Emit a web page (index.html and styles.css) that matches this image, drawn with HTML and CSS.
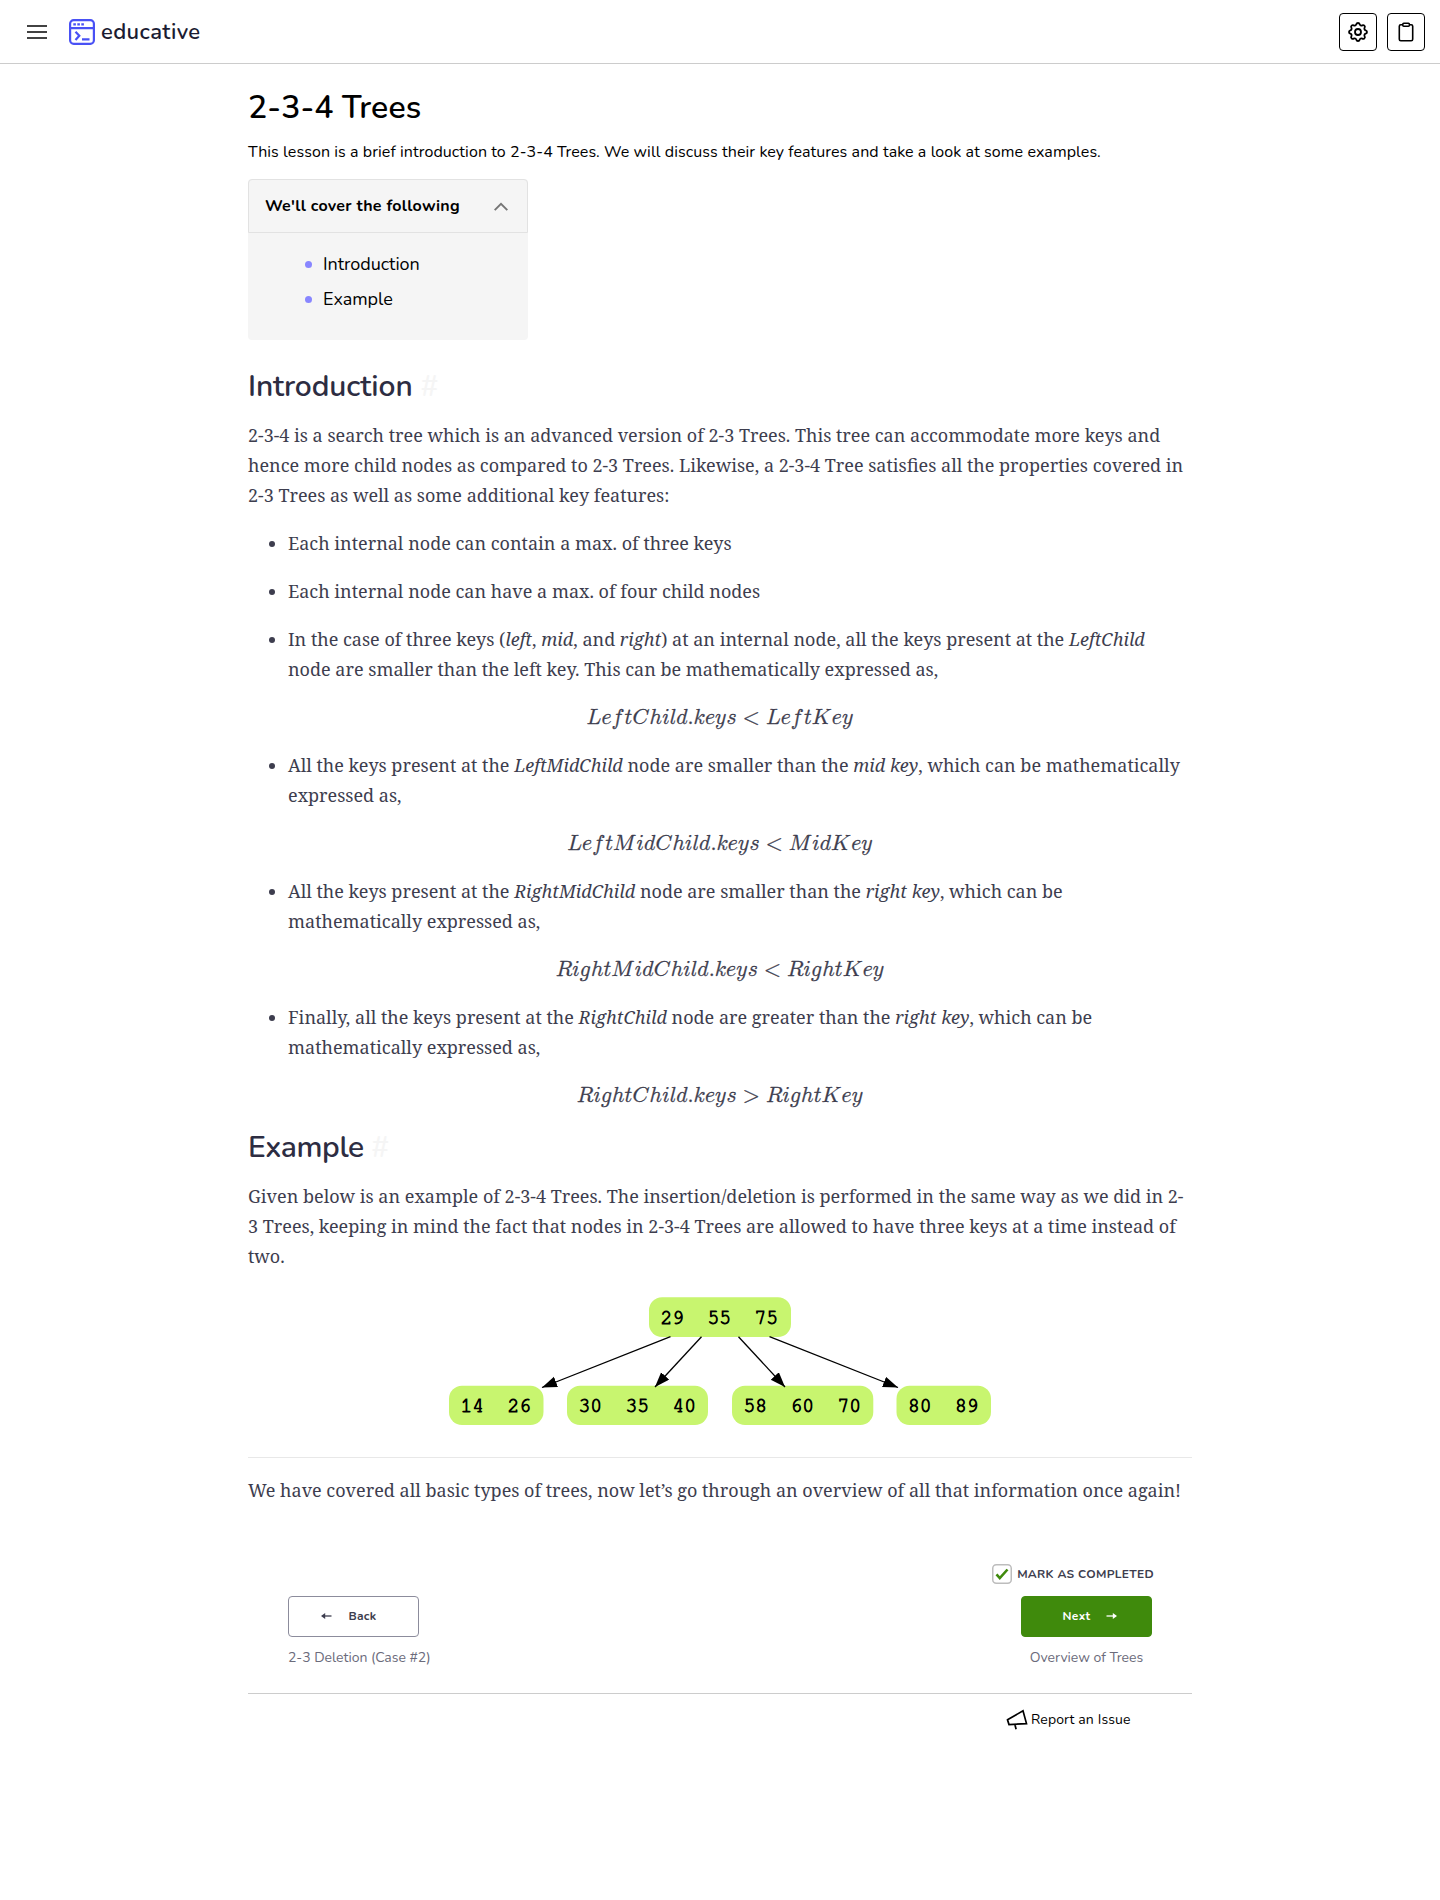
FILE: index.html
```
<!DOCTYPE html>
<html lang="en">
<head>
<meta charset="utf-8">
<title>2-3-4 Trees</title>
<link rel="stylesheet" href="styles.css">
</head>
<body>
<header class="topbar">
  <svg class="menu" width="20" height="15" viewBox="0 0 20 15"><path d="M0 2h20M0 8h20M0 14h20" stroke="#424242" stroke-width="2"/></svg>
  <a class="brand">
    <svg width="26" height="26" viewBox="0 0 26 26" fill="none" stroke="#4951f5" stroke-width="2.2"><rect x="1.1" y="1.1" width="23.8" height="23.8" rx="3.6"/><path d="M1 9.2h24M6.500 12.700l3.800 4.100-3.800 4.100M13 20.300h7.500"/><path d="M4.300 5.400h2.600M8.300 5.400h2.600M12.300 5.400h2.600" stroke-width="2.400"/></svg>
    <span>educative</span>
  </a>
  <div class="tools">
    <button class="tool"><svg width="24" height="24" viewBox="0 0 24 24" fill="none" stroke="#000" stroke-width="1.800" stroke-linejoin="round"><circle cx="12" cy="12" r="3"/><path d="M10.325 4.317c.426-1.756 2.924-1.756 3.350 0a1.724 1.724 0 0 0 2.573 1.066c1.543-.94 3.310.826 2.370 2.370a1.724 1.724 0 0 0 1.065 2.572c1.756.426 1.756 2.924 0 3.350a1.724 1.724 0 0 0-1.066 2.573c.94 1.543-.826 3.310-2.370 2.370a1.724 1.724 0 0 0-2.572 1.065c-.426 1.756-2.924 1.756-3.350 0a1.724 1.724 0 0 0-2.573-1.066c-1.543.94-3.310-.826-2.370-2.370a1.724 1.724 0 0 0-1.065-2.572c-1.756-.426-1.756-2.924 0-3.350a1.724 1.724 0 0 0 1.066-2.573c-.94-1.543.826-3.310 2.370-2.370 1 .608 2.296.070 2.572-1.065z"/></svg></button>
    <button class="tool"><svg width="16" height="20" viewBox="0 0 16 20" fill="none" stroke="#000" stroke-width="1.600"><rect x="1.300" y="2.800" width="13.400" height="15.900" rx="1.500"/><rect x="4.800" y="1.300" width="6.600" height="3" rx="1" fill="#fff"/></svg></button>
  </div>
</header>
<main class="lesson">
  <h1>2-3-4 Trees</h1>
  <p class="summary">This lesson is a brief introduction to 2-3-4 Trees. We will discuss their key features and take a look at some examples.</p>
  <nav class="toc">
    <div class="toc-head">We'll cover the following
      <svg width="14" height="9" viewBox="0 0 14 9" fill="none" stroke="#757575" stroke-width="1.900"><path d="M.7 8.200L7 1.800l6.300 6.400"/></svg>
    </div>
    <ul><li>Introduction</li><li>Example</li></ul>
  </nav>
  <h2>Introduction <span class="hash">#</span></h2>
  <div class="prose">
    <p>2-3-4 is a search tree which is an advanced version of 2-3 Trees. This tree can accommodate more keys and hence more child nodes as compared to 2-3 Trees. Likewise, a 2-3-4 Tree satisfies all the properties covered in 2-3 Trees as well as some additional key features:</p>
    <ul>
      <li>Each internal node can contain a max. of three keys</li>
      <li>Each internal node can have a max. of four child nodes</li>
      <li>In the case of three keys (<em>left</em>, <em>mid</em>, and <em>right</em>) at an internal node, all the keys present at the <em>LeftChild</em> node are smaller than the left key. This can be mathematically expressed as,</li>
    </ul>
    <div class="formula"><math><mi>L</mi><mi>e</mi><mi class="f">f</mi><mi>t</mi><mi class="c">C</mi><mi>h</mi><mi>i</mi><mi>l</mi><mi>d</mi><mi mathvariant="normal">.</mi><mi>k</mi><mi>e</mi><mi class="y">y</mi><mi>s</mi><mo>&lt;</mo><mi>L</mi><mi>e</mi><mi class="f">f</mi><mi>t</mi><mi class="c">K</mi><mi>e</mi><mi class="y">y</mi></math></div>
    <ul><li>All the keys present at the <em>LeftMidChild</em> node are smaller than the <em>mid key</em>, which can be mathematically expressed as,</li></ul>
    <div class="formula"><math><mi>L</mi><mi>e</mi><mi class="f">f</mi><mi>t</mi><mi class="m">M</mi><mi>i</mi><mi>d</mi><mi class="c">C</mi><mi>h</mi><mi>i</mi><mi>l</mi><mi>d</mi><mi mathvariant="normal">.</mi><mi>k</mi><mi>e</mi><mi class="y">y</mi><mi>s</mi><mo>&lt;</mo><mi class="m">M</mi><mi>i</mi><mi>d</mi><mi class="c">K</mi><mi>e</mi><mi class="y">y</mi></math></div>
    <ul><li>All the keys present at the <em>RightMidChild</em> node are smaller than the <em>right key</em>, which can be mathematically expressed as,</li></ul>
    <div class="formula"><math><mi>R</mi><mi>i</mi><mi class="y">g</mi><mi>h</mi><mi>t</mi><mi class="m">M</mi><mi>i</mi><mi>d</mi><mi class="c">C</mi><mi>h</mi><mi>i</mi><mi>l</mi><mi>d</mi><mi mathvariant="normal">.</mi><mi>k</mi><mi>e</mi><mi class="y">y</mi><mi>s</mi><mo>&lt;</mo><mi>R</mi><mi>i</mi><mi class="y">g</mi><mi>h</mi><mi>t</mi><mi class="c">K</mi><mi>e</mi><mi class="y">y</mi></math></div>
    <ul><li>Finally, all the keys present at the <em>RightChild</em> node are greater than the <em>right key</em>, which can be mathematically expressed as,</li></ul>
    <div class="formula"><math><mi>R</mi><mi>i</mi><mi class="y">g</mi><mi>h</mi><mi>t</mi><mi class="c">C</mi><mi>h</mi><mi>i</mi><mi>l</mi><mi>d</mi><mi mathvariant="normal">.</mi><mi>k</mi><mi>e</mi><mi class="y">y</mi><mi>s</mi><mo>&gt;</mo><mi>R</mi><mi>i</mi><mi class="y">g</mi><mi>h</mi><mi>t</mi><mi class="c">K</mi><mi>e</mi><mi class="y">y</mi></math></div>
  </div>
  <h2 class="second">Example <span class="hash">#</span></h2>
  <div class="prose">
    <p>Given below is an example of 2-3-4 Trees. The insertion/deletion is performed in the same way as we did in 2-3 Trees, keeping in mind the fact that nodes in 2-3-4 Trees are allowed to have three keys at a time instead of two.</p>
    <svg class="tree" width="944" height="168" viewBox="248 1272 944 168">
      <defs><marker id="arrow" markerUnits="userSpaceOnUse" markerWidth="16" markerHeight="12" refX="15" refY="5.500" orient="auto"><path d="M0 0L15 5.500L0 11z"/></marker></defs>
      <g fill="#c8f56f"><rect x="649" y="1297.300" width="142" height="39.700" rx="13"/><rect x="449" y="1385.700" width="94.500" height="39.300" rx="13"/><rect x="567" y="1385.700" width="141" height="39.300" rx="13"/><rect x="732" y="1385.700" width="141.300" height="39.300" rx="13"/><rect x="896.500" y="1385.700" width="94.500" height="39.300" rx="13"/></g>
      <g stroke="#000" stroke-width="1.300"><path d="M670.500 1336.700L542 1387.500" marker-end="url(#arrow)"/><path d="M701.500 1336.700L655 1387" marker-end="url(#arrow)"/><path d="M738.500 1336.700L785 1387" marker-end="url(#arrow)"/><path d="M769.500 1336.700L898 1387.500" marker-end="url(#arrow)"/></g>
      <g class="keys"><text x="660.500" y="1323.700">29  55  75</text><text x="460.500" y="1412">14  26</text><text x="578.500" y="1412">30  35  40</text><text x="743.500" y="1412">58  60  70</text><text x="908" y="1412">80  89</text></g>
    </svg>
    <hr>
    <p>We have covered all basic types of trees, now let’s go through an overview of all that information once again!</p>
  </div>
  <footer class="pager">
    <div class="prev">
      <a class="btn back"><svg width="11" height="8" viewBox="0 0 11 8"><path d="M2 4h8.500" stroke="#3d3d4e" stroke-width="1.300"/><path d="M0 4l4.200-3v6z" fill="#3d3d4e"/></svg><span>Back</span></a>
      <span class="where">2-3 Deletion (Case #2)</span>
    </div>
    <div class="next">
      <label class="done"><svg width="20" height="20" viewBox="0 0 20 20" fill="none"><rect x=".75" y=".75" width="18.500" height="18.500" rx="3.500" stroke="#bdbdbd" stroke-width="1.500"/><path d="M4.500 10.300l3.300 3.700 7.700-8.500" stroke="#3f8a0c" stroke-width="2.600"/></svg>Mark as Completed</label>
      <a class="btn go"><span>Next</span><svg width="11" height="8" viewBox="0 0 11 8"><path d="M.5 4H9" stroke="#fff" stroke-width="1.300"/><path d="M11 4L6.800 1v6z" fill="#fff"/></svg></a>
      <span class="where">Overview of Trees</span>
    </div>
  </footer>
  <div class="report">
    <svg width="22" height="21" viewBox="0 0 22 21" fill="none" stroke="#000" stroke-width="1.700"><path d="M1.500 10.800L17 1.800l3.500 12.800L3 15.500zM8.800 15.300l1.300 4.900"/></svg>
    Report an Issue
  </div>
</main>
</body>
</html>
```
FILE: styles.css
```
* { box-sizing: border-box; }
body { margin: 0; background: #fff; color: #000; font-family: Nunito, "Nunito Sans", "Open Sans", sans-serif; }
h1, h2, p, ul { margin: 0; padding: 0; }
svg { display: block; flex: none; }

.topbar { display: flex; align-items: center; height: 64px; padding: 0 15px 0 27px; border-bottom: 1px solid #ccc; }
.brand { display: flex; align-items: center; gap: 6px; margin-left: 22px; color: #1b1c32; font-size: 22px; font-weight: 600; letter-spacing: .4px; }
.tools { display: flex; gap: 10px; margin-left: auto; }
.tool { display: flex; align-items: center; justify-content: center; width: 38px; height: 38px; padding: 0; background: #fff; border: 1px solid #000; border-radius: 4px; }

.lesson { width: 944px; margin: 0 auto; padding-top: 22px; }
h1 { font-size: 32px; line-height: 44px; font-weight: 600; letter-spacing: .1px; }
.summary { margin-top: 10px; font-size: 16px; line-height: 24px; letter-spacing: .08px; white-space: nowrap; }

.toc { width: 280px; height: 161px; margin-top: 15px; background: #f5f5f5; border-radius: 4px; }
.toc-head { display: flex; align-items: center; justify-content: space-between; height: 54px; padding: 0 19px 0 16px; border: 1px solid #e2e2e2; border-radius: 4px 4px 0 0; font-size: 16px; font-weight: 700; letter-spacing: .3px; }
.toc ul { padding: 13px 0 0 57px; list-style: none; }
.toc li { display: flex; align-items: center; gap: 11px; height: 35px; font-size: 18px; letter-spacing: -.05px; }
.toc li::before { content: ""; width: 7px; height: 7px; margin-top: 2px; border-radius: 50%; background: #8886ff; }

h2 { margin: 27px 0 13px; color: #2d2d42; font-size: 30px; line-height: 40px; font-weight: 600; letter-spacing: -.1px; }
h2.second { margin-top: 18px; letter-spacing: -.4px; }
.hash { color: #f5f5f5; }

.prose { color: #3d3d4e; font-family: "Noto Serif", "DejaVu Serif", serif; font-size: 18px; line-height: 30px; }
.prose ul { margin-top: 18px; padding-left: 40px; }
.prose li + li { margin-top: 18px; }
.formula { display: flex; align-items: center; justify-content: center; height: 30px; margin-top: 18px; padding-top: 4px; }
.formula math { font-family: "Latin Modern Math", math; font-size: 21.780px; line-height: 30px; -webkit-text-stroke: .3px #3d3d4e; }
/* italic correction after slanted letters */
.formula .f, .formula .m { margin-right: .108em; }
.formula .c { margin-right: .072em; }
.formula .y { margin-right: .036em; }
.tree { margin-top: 1px; font-family: FreeMono, "Liberation Mono", monospace; }
.keys text { font-size: 19.600px; white-space: pre; stroke: #000; stroke-width: .9px; }
hr { margin: 17px 0; border: 0; border-top: 1px solid #e8e8e8; }

.pager { display: flex; align-items: flex-end; justify-content: space-between; height: 189px; padding: 0 40px 25px; border-bottom: 1px solid #ccc; color: #3d3d4e; }
.btn { display: flex; align-items: center; justify-content: center; gap: 16px; width: 131px; height: 41px; border: 1px solid #8c8c9c; border-radius: 4px; font-size: 12px; font-weight: 700; letter-spacing: .3px; }
.back { padding: 0 9px 1px 0; }
.go { padding: 0 0 1px 7px; background: #3f8a0c; border-color: #3f8a0c; color: #fff; }
.where { display: block; margin-top: 11px; color: #6b6b7b; font-size: 14px; line-height: 20px; letter-spacing: -.03px; white-space: nowrap; }
.next { display: flex; flex-direction: column; align-items: center; width: 161px; margin-right: -2px; }
.next .btn, .next .where { margin-left: 26px; }
.done { display: flex; align-items: center; gap: 5px; margin: 0 1px 12px 0; font-size: 12px; font-weight: 700; letter-spacing: .3px; text-transform: uppercase; white-space: nowrap; }
.report { display: flex; align-items: center; gap: 3px; height: 51px; padding-left: 758px; font-size: 14px; letter-spacing: .12px; }
```
